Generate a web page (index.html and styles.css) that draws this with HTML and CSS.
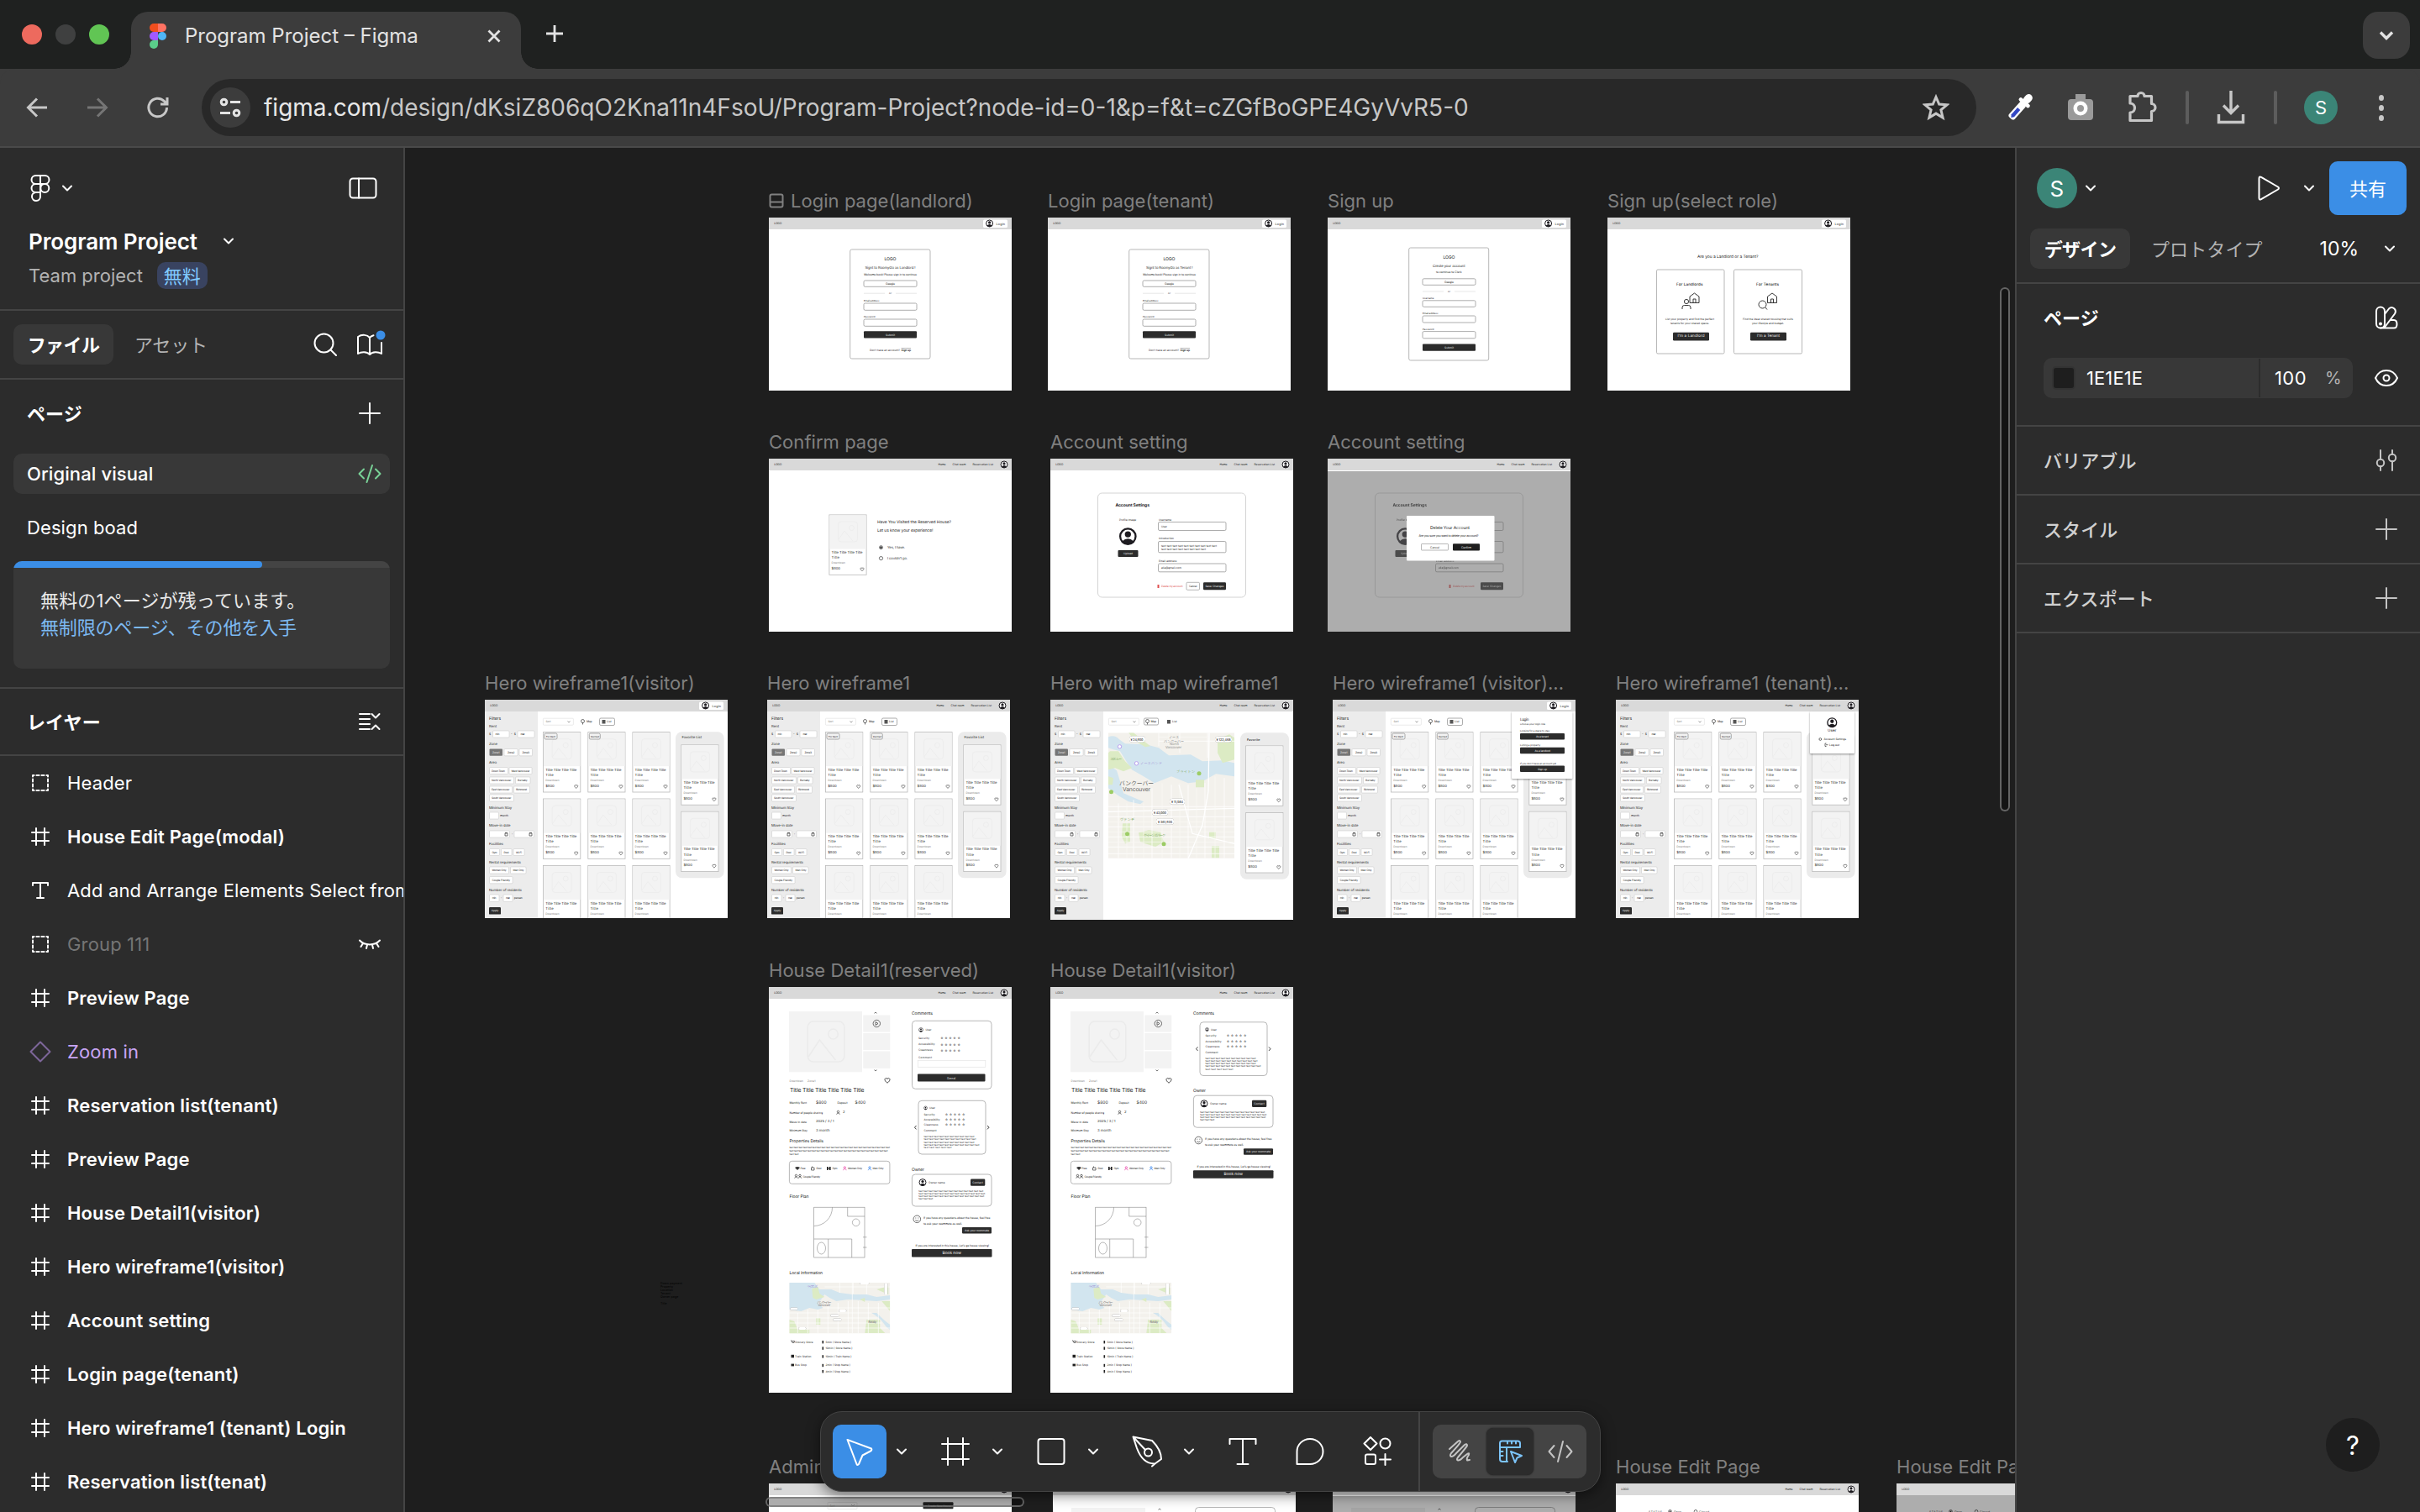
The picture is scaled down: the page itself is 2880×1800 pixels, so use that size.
FILE: index.html
```html
<!DOCTYPE html>
<html lang="ja">
<head>
<meta charset="utf-8">
<title>Program Project – Figma</title>
<link rel="stylesheet" href="styles.css">
</head>
<body>
<!-- Shared drawings -->
<svg class="defs" width="0" height="0">
<defs>
  <g id="i-chev"><path d="M-5-2.500 0 2.500 5-2.500"/></g>
  <g id="i-frame"><path d="M-5-10V10M5-10V10M-10-5H10M-10 5H10"/></g>
  <g id="i-plus"><path d="M-12 0H12M0-12V12"/></g>
  <g id="i-group"><rect x="-9" y="-9" width="18" height="18" stroke-dasharray="3.200 2.800" stroke-dashoffset="1.600"/></g>
  <g id="i-text"><path d="M-9-6V-9H9V-6M0-9V9M-4 9H4"/></g>

  <g id="avatar"><circle r="4" fill="#fff" stroke="#1d1b20" stroke-width="1"/><circle cy="-1.1" r="1.6" fill="#1d1b20"/><path d="M-3 2.6Q0-.4 3 2.6Q0 5.6-3 2.6" fill="#1d1b20"/></g>
  <g id="heart"><path d="M0 1.8C-3-.3-2-2 -.9-2Q-.2-2 0-1.3Q.2-2 .9-2C2-2 3-.3 0 1.8Z" fill="none" stroke="#333" stroke-width=".6"/></g>
  <g id="pic"><rect x="-11.5" y="-12" width="23" height="24" rx="3.5"/><circle cx="4.5" cy="-4.5" r="3"/><path d="M-11 9-4-1 6 11"/></g>
  <g id="stars"><text class="t36" x="0" y="0" textLength="24">☆☆☆☆☆</text></g>
  <g id="person"><circle cy="-1" r="1.2"/><path d="M-1.8 2.2C-1.5 0 1.5 0 1.8 2.2"/></g>

  <g id="hdr"><rect width="290" height="14" fill="#d9d9d9"/><text class="t34" x="6.3" y="7" textLength="9">LOGO</text></g>
  <g id="hdr-login"><use href="#hdr"/><rect x="255" y="2.5" width="29" height="9.5" rx="1.5" fill="#fff"/><use href="#avatar" x="262.6" y="7"/><text class="t36" x="270.5" y="7.2" textLength="10.5">Login</text></g>
  <g id="hdr-nav"><use href="#hdr"/><text class="t34" x="201.6" y="7" textLength="9">Home</text><text class="t34" x="218.5" y="7" textLength="16">Chat room</text><text class="t34" x="242.5" y="7" textLength="24.5">Reservation List</text><use href="#avatar" x="280" y="7"/></g>

  <g id="card">
    <rect x=".4" y=".4" width="44.2" height="71.4" fill="#fff" stroke="#b9b9b9" stroke-width=".8"/>
    <rect x=".8" y="1" width="43.4" height="40" fill="#f3f3f3"/>
    <use href="#pic" x="22.5" y="20.5" class="faint"/>
    <text class="t40" x="3" y="46" textLength="37">Title Title Title Title</text>
    <text class="t40" x="3" y="52.3" textLength="9.5">Title</text>
    <text class="t32 dim" x="3" y="57.8" textLength="16.5">Downtown</text>
    <text class="t40" x="3" y="65.2" textLength="10.5">$800</text>
    <use href="#heart" x="39.5" y="65.4"/>
  </g>

  <g id="sidebar">
    <rect y="14" width="63" height="250" fill="#ececec"/>
    <text class="t46" x="5" y="22.6" textLength="14">Filters</text>
    <text class="t40" x="5" y="32" textLength="9">Rent</text>
    <text class="t34" x="5" y="41">$</text><text class="t34" x="31" y="41" textLength="6">- $</text>
    <text class="t40" x="5" y="53.6" textLength="10">Zone</text>
    <text class="t40" x="5" y="75.2" textLength="9">Area</text>
    <text class="t40" x="5" y="129" textLength="27">Minimum Stay</text><text class="t34" x="18" y="138.4" textLength="10">month</text>
    <text class="t40" x="5" y="150.7" textLength="25.5">Move-in date</text><text class="t34" x="31.7" y="160">-</text>
    <text class="t40" x="5" y="172.4" textLength="17">Facilities</text>
    <text class="t40" x="5" y="194" textLength="38">Rental requirements</text>
    <text class="t40" x="5" y="227" textLength="39">Number of residents</text><text class="t34" x="18.8" y="236">-</text><text class="t34" x="34.8" y="236" textLength="10">person</text>
    <g class="chip">
      <rect x="9.5" y="37" width="19.5" height="8" rx="1"/><rect x="39" y="37" width="20" height="8" rx="1"/>
      <rect x="23" y="58.5" width="16" height="8.3" rx="1"/><rect x="41" y="58.5" width="15.5" height="8.3" rx="1"/>
      <rect x="5.5" y="80.5" width="22" height="8" rx="1"/><rect x="29" y="80.5" width="27" height="8" rx="1"/>
      <rect x="5.5" y="92" width="29" height="8" rx="1"/><rect x="36.5" y="92" width="17.5" height="8" rx="1"/>
      <rect x="5.5" y="103" width="27" height="8" rx="1"/><rect x="34.5" y="103" width="19" height="8" rx="1"/>
      <rect x="5.5" y="113" width="29" height="8" rx="1"/>
      <rect x="5.5" y="134" width="11" height="8" rx="1"/>
      <rect x="5.5" y="156" width="24" height="8" rx="1"/><rect x="35" y="156" width="23.5" height="8" rx="1"/>
      <rect x="5.5" y="177.5" width="12" height="8" rx="1"/><rect x="19.5" y="177.5" width="12.5" height="8" rx="1"/><rect x="34" y="177.5" width="13" height="8" rx="1"/>
      <rect x="5.5" y="199" width="23" height="8" rx="1"/><rect x="30.5" y="199" width="18.5" height="8" rx="1"/>
      <rect x="5.5" y="210.5" width="27.5" height="8.3" rx="1"/>
      <rect x="5.5" y="232" width="11.5" height="8.3" rx="1"/><rect x="22" y="232" width="11" height="8.3" rx="1"/>
    </g>
    <rect x="5.5" y="58.5" width="15.5" height="8.3" rx="1" fill="#757575"/>
    <rect x="5" y="247" width="14" height="8.6" rx="1.2" fill="#2c2c2c"/>
    <g class="t32">
      <text x="12.5" y="41" textLength="5">min</text><text x="42.5" y="41" textLength="5">max</text>
      <text class="inv" x="9" y="62.8" textLength="8.5">Zone1</text><text x="27" y="62.8" textLength="8.5">Zone2</text><text x="44.5" y="62.8" textLength="8.5">Zone3</text>
      <text x="8" y="84.6" textLength="16">Down Town</text><text x="31.5" y="84.6" textLength="22">West Vancouver</text>
      <text x="8" y="96" textLength="23.5">North Vancouver</text><text x="39" y="96" textLength="11.5">Burnaby</text>
      <text x="8" y="107.2" textLength="21.5">East Vancouver</text><text x="37" y="107.2" textLength="13">Richmond</text>
      <text x="8" y="117" textLength="23.5">South Vancouver</text>
      <text x="8.5" y="181.8" textLength="6">Gym</text><text x="22.5" y="181.8" textLength="6">Pool</text><text x="37" y="181.8" textLength="7">Wi-Fi</text>
      <text x="8.5" y="203.2" textLength="17">Women Only</text><text x="33.5" y="203.2" textLength="13">Men Only</text>
      <text x="8.5" y="214.8" textLength="21.5">Couple Friendly</text>
      <text x="8.7" y="236.2" textLength="4.6">min</text><text x="25" y="236.2" textLength="5">max</text>
      <text class="inv" x="7.8" y="251.3" textLength="8.6">Apply</text>
    </g>
    <path d="M24 159h3v3h-3zM24 158.4h3M53 159h3v3h-3zM53 158.4h3" fill="none" stroke="#333" stroke-width=".7"/>
  </g>
  <g id="sort"><rect x="69.4" y="22.2" width="36" height="8" rx="1" fill="#fff" stroke="#dedede" stroke-width=".6"/><text class="t32 dim" x="72.5" y="26.2" textLength="6">Sort</text><path d="M98.500 25.600 100 27l1.500-1.400" fill="none" stroke="#555" stroke-width=".6"/></g>
  <g id="favs">
    <rect x="227" y="38.3" width="57.6" height="174" rx="7.5" fill="#ebebeb"/>
    <text class="t40" x="234.5" y="45.4" textLength="23.5">Favorite List</text>
    <use href="#card" x="233.4" y="53.4"/><use href="#card" x="233.4" y="132.8"/>
  </g>
  <g id="hero-body">
    <rect width="290" height="262" fill="#fff"/>
    <use href="#sidebar"/><use href="#sort"/>
    <circle cx="116.5" cy="25.5" r="2" class="ln"/><path d="M116.500 27v2.500" class="ln"/><text class="t34" x="121" y="26.2" textLength="6.5">Map</text>
    <rect x="136.5" y="22" width="18" height="8.5" rx="1.6" class="lng"/><rect x="139.5" y="24" width="4" height="4.5" fill="#555"/><text class="t34" x="145" y="26.2" textLength="5.5">List</text>
    <use href="#card" x="69.2" y="38.2"/><use href="#card" x="122.4" y="38.2"/><use href="#card" x="175.5" y="38.2"/>
    <use href="#card" x="69.2" y="117.6"/><use href="#card" x="122.4" y="117.6"/><use href="#card" x="175.5" y="117.6"/>
    <use href="#card" x="69.2" y="197"/><use href="#card" x="122.4" y="197"/><use href="#card" x="175.5" y="197"/>
    <rect x="71" y="40" width="15" height="7" rx="1.5" class="tag"/><text class="t30" x="73" y="43.6" textLength="11">For Rent</text>
    <rect x="124.3" y="40" width="13" height="7" rx="1.5" class="tag"/><text class="t30" x="126" y="43.6" textLength="10">Rented</text>
    <use href="#favs"/>
  </g>

  <g id="acct">
    <rect x="56.5" y="41" width="176" height="124" rx="5" fill="none" stroke="#c9c9c9" stroke-width=".8"/>
    <text class="t48 b" x="77.5" y="55.6" textLength="40.5">Account Settings</text>
    <text class="t32" x="82" y="72.7" textLength="20">Profile Image</text>
    <g transform="translate(92.300 92.600) scale(2.300)"><use href="#avatar"/></g>
    <rect x="80.5" y="109" width="24" height="8" rx="1" fill="#2c2c2c"/><text class="t32 inv" x="87" y="113.2" textLength="11">Upload</text>
    <g class="fld"><rect x="128.5" y="75.5" width="80.5" height="10" rx="1.5"/><rect x="128.5" y="98.5" width="80.5" height="13.3" rx="1.5"/><rect x="128.5" y="125" width="80.5" height="9.8" rx="1.5"/></g>
    <text class="t32" x="129" y="72.7" textLength="15">Username</text><text class="t32" x="132" y="80.7" textLength="7">User</text>
    <text class="t32" x="129" y="95.3" textLength="18">Introduction</text>
    <text class="t32" x="132" y="103.6" textLength="66">text text text text text text text text text text</text>
    <text class="t32" x="132" y="107.5" textLength="53">text text text text text text text text</text>
    <text class="t32" x="129" y="122" textLength="21.5">Email address</text><text class="t32" x="132" y="130" textLength="24">alia@gmail.com</text>
    <rect x="182" y="147.3" width="27" height="9" rx="1.2" fill="#2c2c2c"/><text class="t32 inv" x="184.5" y="152" textLength="22">Save Changes</text>
  </g>

  <g id="signin-form">
    <rect x="96.7" y="38" width="95.3" height="130" rx="2" class="bx"/>
    <text class="t50" x="137.5" y="50" textLength="14">LOGO</text>
    <text class="t34" x="113" y="67.6" textLength="63">Welcome back! Please sign in to continue</text>
    <g class="fld"><rect x="113" y="75" width="63" height="7.3" rx="1.5"/><rect x="113" y="102" width="63" height="8.3" rx="1.5"/><rect x="113" y="121" width="63" height="8.3" rx="1.5"/></g>
    <text class="t34" x="139" y="78.8" textLength="11">Google</text>
    <path d="M113 90.200H138M151 90.200H176" stroke="#ddd" stroke-width=".7"/><text class="t30" x="143" y="90" textLength="3">or</text>
    <text class="t30" x="113" y="99" textLength="18.5">Email address</text><text class="t30" x="113" y="118" textLength="13.5">Password</text>
    <rect x="113" y="135.3" width="63" height="8.3" rx="1" fill="#2c2c2c"/><text class="t32 inv" x="139" y="139.7" textLength="11">Submit</text>
    <text class="t32" x="120" y="158.3" textLength="36">Don’t have an account?</text><text class="t32 b u" x="157.5" y="158.3" textLength="11.5">Sign up</text>
  </g>

  <g id="detail-left">
    <rect x="24" y="29" width="87" height="72.3" fill="#f3f3f3"/>
    <g transform="translate(68 65) scale(1.900 2)" class="faint"><use href="#pic"/></g>
    <g fill="#f3f3f3"><rect x="112.3" y="33.5" width="32" height="20"/><rect x="112.3" y="55" width="32" height="20"/><rect x="112.3" y="76.5" width="32" height="20.3"/></g>
    <path d="M125.500 31.300 127 30l1.500 1.300M125.500 98.700l1.500 1.300 1.500-1.300" class="ln"/>
    <circle cx="128.3" cy="43.5" r="4.2" class="ln"/><path d="M127 41.500v4l3-2z" class="ln"/>
    <text class="t32 dim" x="24.5" y="111.7" textLength="16.5">Downtown</text><text class="t32 dim" x="46" y="111.7" textLength="9.5">Zone1</text>
    <g transform="translate(141 111.500) scale(1.500)"><use href="#heart"/></g>
    <text class="t60" x="25" y="122.3" textLength="88.5">Title Title Title Title Title Title</text>
    <text class="t34" x="24.5" y="138" textLength="20.5">Monthly Rent</text><text class="t46" x="56" y="138" textLength="12.5">$800</text><text class="t34" x="81.5" y="138" textLength="12">Deposit</text><text class="t46" x="102.5" y="138" textLength="12.5">$400</text>
    <text class="t34" x="24.5" y="149.7" textLength="39.5">Number of people sharing</text><use href="#person" x="82.5" y="149.5" class="ln"/><text class="t40" x="88" y="149.7">2</text>
    <text class="t34" x="24.5" y="160.6" textLength="20.5">Move-in date</text><text class="t40" x="56" y="160.6" textLength="21.5">2025 / 3 / 1</text>
    <text class="t34" x="24.5" y="171" textLength="21.5">Minimum Stay</text><text class="t40" x="56" y="171" textLength="16.5">3 month</text>
    <text class="t48" x="24.5" y="183.8" textLength="40.5">Properties Details</text>
    <text class="t30" x="24.5" y="191.2" textLength="119.5">text text text text text text text text text text text text text text text text text text text text text text</text>
    <text class="t30" x="24.5" y="194.9" textLength="117">text text text text text text text text text text text text text text text text text text text text text text</text>
    <text class="t30" x="24.5" y="198.6" textLength="11">text text</text>
    <rect x="24.4" y="207.3" width="119.5" height="27" rx="3" class="bx"/>
    <path d="M31 215q3-2 6 0L34 218z" fill="#333"/><text class="t32" x="37.5" y="216.2" textLength="6">Free</text>
    <path d="M50.500 215h3.500v3h-3.500zM51.500 215v-1.500" class="ln"/><text class="t32" x="56.5" y="216.2" textLength="6">Pool</text>
    <path d="M69 214h1.600v4H69zM72 214h1.600v4H72zM69 215.500h4.500v1H69z" fill="#222"/><text class="t32" x="75.5" y="216.2" textLength="6">Gym</text>
    <use href="#person" x="90.3" y="216" class="ln pink"/><text class="t32" x="94" y="216.2" textLength="17">Women Only</text>
    <use href="#person" x="120" y="216" class="ln blue"/><text class="t32" x="123.5" y="216.2" textLength="13">Men Only</text>
    <use href="#person" x="32.5" y="225.5" class="ln"/><use href="#person" x="37" y="225.5" class="ln"/><text class="t32" x="40.5" y="225.7" textLength="20.5">Couple Friendly</text>
    <text class="t48" x="24.5" y="249.8" textLength="23">Floor Plan</text>
    <g class="plan"><rect x="53.7" y="262.2" width="60.3" height="59.8"/><path d="M75.500 262.200A22 22 0 0 1 53.700 284.500M93.700 262.200V273H114M53.700 300H98.700V322M70.700 300V322M112 297.800h4.500M112 310h4.500"/><ellipse cx="62.5" cy="311" rx="5" ry="7"/><circle cx="103.7" cy="280.3" r="4.3"/></g>
    <text class="t48" x="24.5" y="340.5" textLength="39.5">Local Information</text>
    <svg x="24.3" y="352" width="120" height="60.5" viewBox="0 0 120 60.500"><use href="#map-wide"/></svg>
    <path d="M26 421h1l1 2.500h2l.6-2h-3" class="ln"/><text class="t32" x="31" y="422.6" textLength="21.5">Grocery Store</text>
    <rect x="26.5" y="437.8" width="3.5" height="3.5" fill="#222"/><text class="t32" x="31" y="439.7" textLength="19.5">Train Station</text>
    <rect x="26.5" y="448.6" width="3.5" height="2.8" fill="#222"/><text class="t32" x="31" y="450.3" textLength="14">Bus Stop</text>
    <g fill="#222"><rect x="63.5" y="421" width="1.6" height="3.4"/><rect x="63.5" y="428.4" width="1.6" height="3.4"/><rect x="63.5" y="438.2" width="1.6" height="3.4"/><rect x="63.5" y="448.8" width="1.6" height="3.4"/><rect x="63.5" y="456" width="1.6" height="3.4"/></g>
    <g class="t32"><text x="67.5" y="422.6" textLength="30.5">5min ( Store Name )</text><text x="67.5" y="430" textLength="32">10min ( Store Name )</text><text x="67.5" y="439.7" textLength="31">10min ( Train Name )</text><text x="67.5" y="450.3" textLength="29.5">2min ( Stop Name )</text><text x="67.5" y="457.6" textLength="29.5">4min ( Stop Name )</text></g>
    <text class="t48" x="170" y="32" textLength="25">Comments</text>
  </g>
  <g id="review">
    <rect x="178" y="135.3" width="80" height="63.7" rx="4" class="bx"/>
    <g transform="translate(186.500 144) scale(.5)"><use href="#avatar"/></g><text class="t32" x="191" y="144.2" textLength="7">User</text>
    <text class="t32" x="184.5" y="151.6" textLength="13">Security</text><text class="t32" x="184.5" y="158" textLength="19">Accessibility</text><text class="t32" x="184.5" y="164.2" textLength="17">Cleanness</text>
    <use href="#stars" x="209.5" y="151.2"/><use href="#stars" x="209.5" y="157.6"/><use href="#stars" x="209.5" y="163.8"/>
    <text class="t32" x="184.5" y="171.4" textLength="15">Comment</text>
    <g class="t30"><text x="184.5" y="178" textLength="60">text text text text text text text text text text</text><text x="184.5" y="181.3" textLength="62">text text text text text text text text text text</text><text x="184.5" y="184.6" textLength="60">text text text text text text text text text text</text><text x="184.5" y="187.8" textLength="66">text text text text text text text text text text text</text><text x="184.5" y="191" textLength="33">text text text text text</text></g>
    <path d="M175.500 165 173.500 167.200l2 2.200M260 165l2 2.200-2 2.200" fill="none" stroke="#222" stroke-width=".9"/>
  </g>
  <g id="owner">
    <text class="t48" x="170" y="217.6" textLength="15">Owner</text>
    <rect x="170.4" y="223" width="94.6" height="38" rx="4" class="bx"/>
    <use href="#avatar" x="183" y="232.6"/><text class="t32" x="190" y="232.8" textLength="19.5">Owner name</text>
    <rect x="240" y="228.5" width="17.3" height="8.3" rx="1.2" fill="#2c2c2c"/><text class="t32 inv" x="242.3" y="232.8" textLength="12.5">Contact</text>
    <g class="t30"><text x="178.3" y="243" textLength="77">text text text text text text text text text text text text text</text><text x="178.3" y="245.9" textLength="79">text text text text text text text text text text text text text</text><text x="178.3" y="248.8" textLength="78">text text text text text text text text text text text text text</text><text x="178.3" y="251.7" textLength="17">text text text</text></g>
    <circle cx="176.3" cy="276.3" r="4.3" class="ln"/><path d="M174.300 277.500q2 2 4 0M174.800 274.500v1M177.800 274.500v1" class="ln"/>
    <text class="t34" x="184" y="275.2" textLength="79.5">If you have any questions about the house, feel free</text><text class="t34" x="184" y="282" textLength="46">to ask your roommate as well.</text>
    <rect x="230" y="286" width="35" height="7.5" rx="1" fill="#2c2c2c"/><text class="t32 inv" x="233" y="290" textLength="29">Ask your roommate</text>
    <text class="t34" x="174.5" y="307.6" textLength="87.5">If you are interested in this house, Let’s go house viewing!</text>
    <rect x="170" y="312" width="95.5" height="9.5" rx="1" fill="#2c2c2c"/><text class="t46 inv" x="206.5" y="317" textLength="22.5">Book now</text>
  </g>

  <g id="map-sq">
    <rect width="150" height="150" fill="#f3f1ec"/>
    <path d="M0 5Q8 2 13 8L20 13 45 14 60 18 72 27 98 26 112 34 135 33 150 36V52L128 49 112 58 95 60 75 52 55 60 42 52 28 44 22 35 14 22 6 20 0 18ZM0 38 10 45 14 58 18 72 32 78 42 82 38 85 24 82 12 75 0 66Z" fill="#d2e5ef"/>
    <path d="M2 22 12 22 20 34 28 42 18 46 8 42 0 44V24ZM24 0 30 0 50 16 44 17 32 10ZM104 56h10v9h-10zM36 119l12-3 14 2 4 12-10 6-18-6ZM17 108h9v22l-6 2-4-8ZM123 135h9v14h-9zM130 8l14-6 6 4V32l-14 4-6-12ZM120 118h8v8h-8zM0 52 6 54 5 62 0 62Z" fill="#dcebc4"/>
    <path d="M0 88H150M0 100H150M0 112H150M0 124H150M0 136H150M30 80V150M52 66V150M75 62V150M95 62V150M115 60V150M138 54V150M12 84V150M0 144H150M60 16V0M85 24V0M118 30V0M60 10H150" stroke="#fff" stroke-width=".8" fill="none"/>
    <path d="M120 0 119 70 112 110 95 150M0 94Q70 92 150 90M84 62 100 120 150 132" stroke="#fff" stroke-width="1.3" fill="none"/>
    <path d="M22 84V150M42 84V150M64 60V150M85 60V150M105 66V150M127 52V150M0 106H150M0 118H150M0 130H150M60 5H118M72 0V20" stroke="#faf9f6" stroke-width=".7" fill="none"/>
    <g fill="#9ccc65"><circle cx="108" cy="48.5" r="2.5"/><circle cx="22.5" cy="120.5" r="2.5"/><circle cx="66" cy="132.5" r="2.5"/><circle cx="3.5" cy="70.5" r="2.5"/></g>
    <g fill="#fff" stroke="#b9a0f0" stroke-width="1"><circle cx="13.5" cy="16.5" r="2.2"/><circle cx="33.5" cy="36.5" r="2.2"/></g>
    <g class="mapt"><text x="13" y="60" textLength="41" class="city">バンクーバー</text><text x="17" y="67.5" textLength="33" class="city">Vancouver</text>
    <text x="72" y="5" textLength="12">ノース</text><text x="66" y="10" textLength="24">バンクーバー</text><text x="73" y="13.5" textLength="11">North</text><text x="68" y="17.5" textLength="19">Vancouver</text>
    <text x="38" y="36" textLength="26" class="vi">ノースバンド</text><text x="81" y="46.5" textLength="22" class="gr">ブライトン</text><text x="42" y="122" textLength="26" class="gr">クイーンズパーク</text><text x="14" y="103" textLength="17" class="gr">ヴァンデ</text><text x="2" y="31" textLength="14" class="gr">スタンレー</text></g>
    <g class="price"><rect x="25" y="4" width="19" height="7.5" rx="3.7"/><rect x="127" y="4.5" width="20" height="7" rx="3.5"/><rect x="73" y="78.500" width="18" height="7" rx="3.5"/><rect x="52" y="91" width="19" height="7.5" rx="3.5"/><rect x="57" y="102" width="21" height="7.5" rx="3.5"/></g>
    <g class="t36 m"><text x="26.5" y="7.8" textLength="15">¥ 24,900</text><text x="128.5" y="8" textLength="17">¥ 122,468</text><text x="75" y="82" textLength="14">¥ 11,584</text><text x="54" y="94.8" textLength="15">¥ 43,000</text><text x="59" y="105.8" textLength="17">¥ 361,935</text></g>
  </g>
  <g id="map-wide">
    <rect width="120" height="60.5" fill="#f3f1ec"/>
    <path d="M0 0H30L36 8 50 8 60 12 75 14 92 14 104 17 120 15V20L104 22 88 21 70 20 56 22 48 18 42 14 38 20 34 24 40 30 34 32 24 30 14 34 0 32ZM98 36Q108 42 112 48T120 56V50Q114 46 104 36Z" fill="#d2e5ef"/>
    <path d="M27 7 34 5 36 13 42 17 32 20 28 18ZM0 44 6 46 10 56 24 56V60.500H0ZM92 44h16v10l6 6H90ZM104 8 118 4V14ZM32 42h5v8h-5zM110 22h10v12zM84 20l6-2v5z" fill="#dcebc4"/>
    <path d="M10 36V60M22 32V60M34 32V60M46 24V60M58 24V60M70 22V60M82 22V60M94 24V60M106 24V60M0 36H98M0 42H105M0 48H110M0 54H120M40 30H120M60 12V0M76 13V0M92 14V0M75 0V60M42 5H120" stroke="#fff" stroke-width=".7" fill="none"/>
    <g class="mapt"><text x="33" y="23.5" textLength="17">バンクーバー</text><text x="34" y="26.5" textLength="15">Vancouver</text><text x="21" y="4" textLength="13" class="vi">ライオンズ</text><text x="94" y="46.5" textLength="10">Burnaby</text></g>
    <g class="price"><rect x="1" y="29.5" width="9" height="3" rx="1.5"/><rect x="59" y="32" width="9" height="3" rx="1.5"/><rect x="49" y="37.5" width="10" height="3" rx="1.5"/><rect x="52" y="42.5" width="10" height="3" rx="1.5"/><rect x="11" y="53" width="9" height="3" rx="1.5"/><rect x="84" y="-1" width="11" height="3" rx="1.5"/><rect x="113" y="1" width="4" height="13" rx=".5"/></g>
  </g>
  <g id="edit"><rect width="290" height="40" fill="#fff"/><text class="t34" x="39" y="33.5" textLength="16">STATUS</text><circle cx="64.5" cy="33.3" r="1.8" class="ln"/><circle cx="64.5" cy="33.3" r=".9" fill="#222"/><text class="t34" x="69" y="33.5" textLength="9">Open</text><circle cx="95" cy="33.3" r="1.8" class="ln"/><text class="t34" x="99" y="33.5" textLength="12">Closed</text></g>
  <g id="admin-form"><rect x="22" y="29" width="88" height="20" fill="#f3f3f3"/><path d="M125.500 31.300 127 30l1.500 1.300" class="ln"/><rect x="169.5" y="28.5" width="95" height="40" rx="4" class="bx"/></g>
</defs>
</svg>

<header class="browser">
  <div class="tabstrip">
    <div class="lights"><i class="red"></i><i class="off"></i><i class="green"></i></div>
    <div class="tab">
      <svg width="20" height="30" viewBox="0 0 20 30"><path d="M5 0h5v10H5A5 5 0 0 1 5 0" fill="#f24e1e"/><path d="M10 0h5a5 5 0 0 1 0 10h-5z" fill="#ff7262"/><path d="M5 10h5v10H5a5 5 0 0 1 0-10" fill="#a259ff"/><circle cx="15" cy="15" r="5" fill="#4fb6f7"/><path d="M5 20h5v5a5 5 0 1 1-5-5" fill="#5ace8a"/></svg>
      <span>Program Project – Figma</span>
      <svg class="x" width="16" height="16" viewBox="0 0 16 16"><path d="M1.500 1.500 14.500 14.500M14.500 1.500 1.500 14.500"/></svg>
    </div>
    <svg class="newtab" width="22" height="22" viewBox="0 0 22 22"><path d="M11 1V21M1 11H21"/></svg>
    <div class="tabmenu"><svg width="20" height="14" viewBox="0 0 20 14"><path d="M3 3.500 10 10.500 17 3.500"/></svg></div>
  </div>
  <div class="toolbar">
    <svg class="nav" width="26" height="26" viewBox="0 0 26 26"><path d="M25 13H3M13 2.500 2.500 13 13 23.500"/></svg>
    <svg class="nav muted" width="26" height="26" viewBox="0 0 26 26"><path d="M1 13H23M13 2.500 23.500 13 13 23.500"/></svg>
    <svg class="nav" width="26" height="26" viewBox="0 0 26 26"><path d="M23.500 13A10.800 10.800 0 1 1 20.500 5.500L23.500 8.500M24 1V9H16"/></svg>
    <div class="omnibox">
      <div class="site"><svg width="26" height="26" viewBox="0 0 26 26"><circle cx="5.5" cy="6.5" r="3.3"/><path d="M13 6.500H25M1 19.500H13"/><circle cx="20.5" cy="19.5" r="3.3"/></svg></div>
      <span class="url"><b>figma.com</b>/design/dKsiZ806qO2Kna11n4FsoU/Program-Project?node-id=0-1&amp;p=f&amp;t=cZGfBoGPE4GyVvR5-0</span>
      <svg class="star" width="32" height="32" viewBox="0 0 32 32"><path d="M16 3.500 19.700 12 29 12.800 21.900 18.900 24.100 28 16 23.100 7.900 28 10.100 18.900 3 12.800 12.300 12Z"/></svg>
    </div>
    <div class="ext">
      <svg width="34" height="42" viewBox="0 0 34 42"><g transform="translate(17 21) rotate(42)"><rect x="-4.5" y="-7" width="9" height="24" rx="3" fill="#fff"/><path d="M-2.200 2H2.200V13L0 16-2.200 13Z" fill="#3347c4"/><rect x="-8" y="-10" width="16" height="4.5" rx="2" fill="#fff"/><rect x="-4.5" y="-20" width="9" height="12" rx="4.5" fill="#fff"/></g></svg>
      <svg width="32" height="36" viewBox="0 0 32 36"><path d="M10 2h12v6h5a4 4 0 0 1 4 4v17a4 4 0 0 1-4 4H5a4 4 0 0 1-4-4V12a4 4 0 0 1 4-4h5z" fill="#9a9a9a"/><circle cx="16" cy="19" r="8.5" fill="#fff"/><circle cx="16" cy="19" r="4" fill="#9a9a9a"/></svg>
      <svg width="36" height="42" viewBox="0 0 36 42"><path d="M4 7.500H13A4 4 0 0 1 21 7.500H29.500V16.500A4.500 4.500 0 0 1 29.500 25.500V36.500H4V27A5.500 5.500 0 0 0 4 16Z" fill="none" stroke="#c7c7c7" stroke-width="3.2" stroke-linejoin="round"/></svg>
      <i class="bar"></i>
      <svg width="34" height="42" viewBox="0 0 34 42"><path d="M17 1V27M8 18.500 17 27.500 26 18.500M2.500 29V38.500H31.500V29" fill="none" stroke="#c7c7c7" stroke-width="3.4"/></svg>
      <i class="bar"></i>
      <div class="me">S</div>
      <div class="dots"><i></i><i></i><i></i></div>
    </div>
  </div>
</header>

<main>
  <aside class="left">
    <section class="file">
      <div class="row top">
        <svg width="60" height="34" viewBox="0 0 60 34" class="ic"><path d="M12 2H6.500a5 5 0 0 0 0 10H12zM12 2h5.500a5 5 0 0 1 0 10H12zM12 12H6.500a5 5 0 0 0 0 10H12zM12 22H6.500a5 5 0 1 0 5.500 5z"/><circle cx="17.3" cy="17" r="5"/><use href="#i-chev" x="44" y="17"/></svg>
        <svg width="34" height="26" viewBox="0 0 34 26" class="ic"><rect x="1.5" y="1.5" width="31" height="23" rx="3.5"/><path d="M12 1.500V24.500"/></svg>
      </div>
      <div class="row title"><span>Program Project</span><svg width="14" height="10" viewBox="-7 -5 14 10" class="ic"><use href="#i-chev"/></svg></div>
      <div class="row team"><span>Team project</span><em>無料</em></div>
    </section>
    <section class="row tabs">
      <span class="pill">ファイル</span><span class="other">アセット</span>
      <svg class="ic search" width="28" height="28" viewBox="0 0 28 28"><circle cx="12.5" cy="12.5" r="11"/><path d="M20.500 20.500 27 27"/></svg>
      <svg class="ic" width="36" height="36" viewBox="0 0 36 36"><path d="M17 10V30C14 26.500 7 26.500 3 29V9C8 5.500 14 6.500 17 10ZM17 30C20 26.500 27 26.500 31 29V16M17 10Q18.500 8 21.500 7.200"/><circle cx="30" cy="7" r="5.5" fill="#3b8ee6" stroke="none"/></svg>
    </section>
    <section class="pages">
      <div class="row head"><span>ページ</span><svg class="ic" width="26" height="26" viewBox="-13 -13 26 26"><use href="#i-plus"/></svg></div>
      <div class="row page on"><span>Original visual</span><svg width="28" height="24" viewBox="-14 -12 28 24" class="ic code"><path d="M-7-5.500-12.500 0-7 5.500M7-5.500 12.500 0 7 5.500M3-10-3.500 10"/></svg></div>
      <div class="row page"><span>Design boad</span></div>
      <div class="quota"><div class="meter"><i></i></div><p><span>無料の1ページが残っています。</span><br><a>無制限のページ、その他を入手</a></p></div>
    </section>
    <section class="row layers-head"><span>レイヤー</span><svg class="ic" width="26" height="24" viewBox="-13 -12 26 24"><path d="M-12-9H0M-12-3H0M-12 3H0M-12 9H0M2.500-9 7-4.500 11.500-9M2.500 9 7 4.500 11.500 9"/></svg></section>
    <ul class="layers">
      <li><svg class="ic" width="26" height="24" viewBox="-13 -12 26 24"><use href="#i-group"/></svg><span>Header</span></li>
      <li class="f"><svg class="ic" width="26" height="24" viewBox="-13 -12 26 24"><use href="#i-frame"/></svg><span>House Edit Page(modal)</span></li>
      <li><svg class="ic" width="26" height="24" viewBox="-13 -12 26 24"><use href="#i-text"/></svg><span>Add and Arrange Elements Select from</span></li>
      <li class="hid"><svg class="ic" width="26" height="24" viewBox="-13 -12 26 24"><use href="#i-group"/></svg><span>Group 111</span><svg class="ic eye" width="26" height="14" viewBox="-13 -7 26 14"><path d="M-12-4.500C-6 2 6 2 12-4.500M-8-1-10.500 3M-3 .8-4 5M3 .8 4 5M8-1 10.500 3"/></svg></li>
      <li class="f"><svg class="ic" width="26" height="24" viewBox="-13 -12 26 24"><use href="#i-frame"/></svg><span>Preview Page</span></li>
      <li class="comp"><svg class="ic" width="26" height="26" viewBox="-13 -13 26 26"><path d="M0-11.500 11.500 0 0 11.500-11.500 0Z"/></svg><span>Zoom in</span></li>
      <li class="f"><svg class="ic" width="26" height="24" viewBox="-13 -12 26 24"><use href="#i-frame"/></svg><span>Reservation list(tenant)</span></li>
      <li class="f"><svg class="ic" width="26" height="24" viewBox="-13 -12 26 24"><use href="#i-frame"/></svg><span>Preview Page</span></li>
      <li class="f"><svg class="ic" width="26" height="24" viewBox="-13 -12 26 24"><use href="#i-frame"/></svg><span>House Detail1(visitor)</span></li>
      <li class="f"><svg class="ic" width="26" height="24" viewBox="-13 -12 26 24"><use href="#i-frame"/></svg><span>Hero wireframe1(visitor)</span></li>
      <li class="f"><svg class="ic" width="26" height="24" viewBox="-13 -12 26 24"><use href="#i-frame"/></svg><span>Account setting</span></li>
      <li class="f"><svg class="ic" width="26" height="24" viewBox="-13 -12 26 24"><use href="#i-frame"/></svg><span>Login page(tenant)</span></li>
      <li class="f"><svg class="ic" width="26" height="24" viewBox="-13 -12 26 24"><use href="#i-frame"/></svg><span>Hero wireframe1 (tenant) Login</span></li>
      <li class="f"><svg class="ic" width="26" height="24" viewBox="-13 -12 26 24"><use href="#i-frame"/></svg><span>Reservation list(tenat)</span></li>
    </ul>
  </aside>

  <div class="canvas">
    <div class="stage">
      <figure class="r1 c1"><figcaption><svg width="18" height="18" viewBox="0 0 18 18"><rect x="1.5" y="1.5" width="15" height="15" rx="2"/><path d="M2 10.500H16"/></svg>Login page(landlord)</figcaption>
        <svg class="ab" width="289" height="206"><use href="#signin-form"/><text class="t40" x="114.5" y="60.6" textLength="60">Signt to RoomyGo as Landlord !</text><use href="#hdr-login"/></svg></figure>
      <figure class="r1 c2"><figcaption>Login page(tenant)</figcaption>
        <svg class="ab" width="289" height="206"><use href="#signin-form"/><text class="t40" x="117" y="60.6" textLength="55.5">Signt to RoomyGo as Tenant !</text><use href="#hdr-login"/></svg></figure>
      <figure class="r1 c3"><figcaption>Sign up</figcaption>
        <svg class="ab" width="289" height="206"><use href="#hdr-login"/>
          <rect x="96.7" y="36" width="95" height="134" rx="2" class="bx"/><text class="t50" x="137.5" y="47.8" textLength="14">LOGO</text>
          <text class="t40" x="125" y="58.6" textLength="38.5">Create your account</text><text class="t34" x="129" y="65.3" textLength="30.5">to continue to Clerk</text>
          <g class="fld"><rect x="113" y="72.8" width="63" height="7.5" rx="1.5"/><rect x="113" y="98.8" width="63" height="7.5" rx="1.5"/><rect x="113" y="117" width="63" height="8" rx="1.5"/><rect x="113" y="135.6" width="63" height="8.2" rx="1.5"/></g>
          <text class="t34" x="139" y="76.7" textLength="11">Google</text><path d="M113 88H138M151 88H176" stroke="#ddd" stroke-width=".7"/><text class="t30" x="143" y="88" textLength="3">or</text>
          <g class="t30"><text x="113" y="95.5" textLength="13.5">Username</text><text x="113" y="114.3" textLength="18.5">Email address</text><text x="113" y="133" textLength="13.5">Password</text></g>
          <rect x="113" y="150.5" width="63" height="8.3" rx="1" fill="#2c2c2c"/><text class="t32 inv" x="139" y="154.9" textLength="11">Submit</text></svg></figure>
      <figure class="r1 c4"><figcaption>Sign up(select role)</figcaption>
        <svg class="ab" width="289" height="206"><use href="#hdr-login"/>
          <text class="t46" x="107" y="46.7" textLength="72.5">Are you a Landlord or a Tenant?</text>
          <rect x="58.5" y="62" width="80.5" height="100" rx="1.5" class="bx"/><rect x="150.5" y="62" width="81" height="100" rx="1.5" class="bx"/>
          <text class="t42 m" x="82" y="80.3" textLength="31.5">For Landlords</text><text class="t42 m" x="177" y="80.3" textLength="27">For Tenants</text>
          <g class="ln2"><path d="M98 101.500V94L103.500 90 109 94V101.500ZM102 101.500V97h3v4.500M89 109v-2q0-2.500 2.500-2.500h5q2.500 0 2.500 2.500v2"/><circle cx="94" cy="100" r="2.6"/><path d="M190.500 101.500V94L196 90 201.500 94V101.500ZM194.500 101.500V97h3v4.500M188 107 190 109.500"/><circle cx="184.5" cy="103.5" r="4.5"/></g>
          <g class="t32"><text x="69" y="121.2" textLength="58">List your property and find the perfect</text><text x="75" y="126.4" textLength="46">tenants for your shared space.</text><text x="161" y="121.2" textLength="60">Find the ideal shared housing that suits</text><text x="172" y="126.4" textLength="38">your lifestyle and budget.</text></g>
          <rect x="78" y="136.7" width="43" height="9.8" rx="1.2" fill="#2c2c2c"/><rect x="170" y="136.7" width="43" height="9.8" rx="1.2" fill="#2c2c2c"/>
          <text class="t42 inv" x="83.5" y="141.9" textLength="32">I’m a Landlord</text><text class="t42 inv" x="178" y="141.9" textLength="27">I’m a Tenant</text></svg></figure>

      <figure class="r2 c1"><figcaption>Confirm page</figcaption>
        <svg class="ab" width="289" height="206"><use href="#hdr-nav"/><use href="#card" x="71.5" y="66.5"/>
          <text class="t46" x="129" y="76.3" textLength="88">Have You Visited the Reserved House?</text><text class="t46" x="129" y="86" textLength="66.5">Let us know your experience!</text>
          <circle cx="133.5" cy="105.7" r="2" class="ln"/><circle cx="133.5" cy="105.7" r="1.2" fill="#222"/><circle cx="133.5" cy="118.6" r="2.1" class="ln"/>
          <text class="t38" x="141" y="105.8" textLength="21">Yes, I have.</text><text class="t38" x="141" y="118.7" textLength="24">I couldn’t go.</text></svg></figure>
      <figure class="r2 c2b"><figcaption>Account setting</figcaption>
        <svg class="ab" width="289" height="206"><use href="#hdr-nav"/><use href="#acct"/><rect x="127.5" y="150" width="2" height="4" fill="#e05050"/><text class="t32 red" x="132" y="152" textLength="25.5">Delete my account</text><rect x="162" y="147.3" width="15.5" height="9" rx="1.2" class="bx"/><text class="t32" x="165" y="152" textLength="9.5">Cancel</text></svg></figure>
      <figure class="r2 c3"><figcaption>Account setting</figcaption>
        <svg class="ab" width="289" height="206"><g opacity=".68"><rect width="290" height="206" fill="#fff"/><use href="#acct"/><rect x="144.5" y="150" width="2" height="4" fill="#e05050"/><text class="t32 red" x="149" y="152" textLength="25.5">Delete my account</text></g>
          <rect y="15" width="290" height="191" fill="#000" opacity=".32"/><use href="#hdr-nav"/>
          <rect x="94" y="68" width="104.5" height="53.5" rx="1" fill="#fff"/>
          <text class="t50" x="122" y="83.2" textLength="47">Delete Your Account</text><text class="t36" x="108.5" y="91.2" textLength="71">Are you sure you want to delete your account?</text>
          <rect x="111.5" y="101.5" width="32" height="7.5" rx=".6" class="bx"/><rect x="149" y="101.2" width="32" height="8.2" rx="1" fill="#1e1e1e"/><text class="t34" x="122" y="105.5" textLength="11">Cancel</text><text class="t34 inv" x="159" y="105.5" textLength="12">Confirm</text></svg></figure>

      <figure class="r3 c0"><figcaption>Hero wireframe1(visitor)</figcaption><svg class="ab" width="289" height="260"><use href="#hero-body"/><use href="#hdr-login"/></svg></figure>
      <figure class="r3 c1h"><figcaption>Hero wireframe1</figcaption><svg class="ab" width="289" height="260"><use href="#hero-body"/><use href="#hdr-nav"/></svg></figure>
      <figure class="r3 c2b"><figcaption>Hero with map wireframe1</figcaption>
        <svg class="ab" width="289" height="262"><use href="#sidebar"/><use href="#sort"/><use href="#hdr-nav"/>
          <rect x="111.5" y="22" width="17" height="8" rx="1.5" class="lng"/><circle cx="115.5" cy="25.5" r="2" class="ln"/><path d="M115.500 27v2.500" class="ln"/><text class="t34" x="119.5" y="26.2" textLength="6.5">Map</text><rect x="139" y="24" width="4" height="4.5" fill="#555"/><text class="t34" x="145" y="26.2" textLength="5.5">List</text>
          <svg x="69" y="39.3" width="150" height="149.5"><use href="#map-sq"/></svg>
          <rect x="226" y="39.3" width="58" height="174.5" rx="7.5" fill="#ebebeb"/><text class="t36 m" x="234" y="47" textLength="15.5">Favorite</text>
          <use href="#card" x="232.3" y="54.5"/><use href="#card" x="232.3" y="134.2"/></svg></figure>
      <figure class="r3 c3h"><figcaption>Hero wireframe1 (visitor)...</figcaption>
        <svg class="ab" width="289" height="260"><use href="#hero-body"/><use href="#hdr-login"/>
          <rect x="213" y="14" width="72.5" height="80" rx="1" class="pop"/>
          <text class="t42" x="223" y="24.2" textLength="10.5">Login</text><g class="t30"><text x="223" y="29.4" textLength="30">Choose your login role</text><text x="223" y="37" textLength="35">Looking for a place to stay</text><text x="223" y="53.6" textLength="24">Listing a property</text><text x="223" y="75.5" textLength="43">If you don’t have an account yet</text></g>
          <g fill="#2c2c2c"><rect x="223" y="40" width="53" height="7.5" rx="1"/><rect x="223" y="56.8" width="53" height="7.5" rx="1"/><rect x="223" y="78.5" width="53" height="7.5" rx="1"/></g>
          <g class="t32"><text class="inv" x="242" y="44" textLength="15">As a tenant</text><text class="inv" x="240.5" y="60.8" textLength="18.5">As a landlord</text><text class="inv" x="244" y="82.5" textLength="11">Sign up</text></g></svg></figure>
      <figure class="r3 c4h"><figcaption>Hero wireframe1 (tenant)...</figcaption>
        <svg class="ab" width="289" height="260"><use href="#hero-body"/><use href="#hdr-nav"/>
          <rect x="231" y="14" width="53" height="50" rx="1" class="pop"/><g transform="translate(257.300 27.200) scale(1.350)"><use href="#avatar"/></g>
          <text class="t42" x="252" y="37.7" textLength="10.5">User</text><circle cx="243.3" cy="47" r="1.4" class="ln"/><text class="t34" x="247.5" y="47.1" textLength="26.5">Account Settings</text><path d="M250.500 52H249v3.500h1.500M250 53.700h2.500" class="ln"/><text class="t34" x="254" y="53.9" textLength="12">Log out</text></svg></figure>

      <figure class="r4 c1"><figcaption>House Detail1(reserved)</figcaption>
        <svg class="ab" width="289" height="483"><use href="#hdr-nav"/><use href="#detail-left"/>
          <rect x="170.5" y="40.3" width="94.5" height="81" rx="4" class="bx"/>
          <g transform="translate(181 51) scale(.6)"><use href="#avatar"/></g><text class="t32" x="186.5" y="51.2" textLength="7">User</text>
          <text class="t32" x="178" y="61" textLength="13">Security</text><text class="t32" x="178" y="68" textLength="19.5">Accessibility</text><text class="t32" x="178" y="75" textLength="17">Cleanness</text>
          <use href="#stars" x="204" y="60.4"/><use href="#stars" x="204" y="68"/><use href="#stars" x="204" y="75"/>
          <text class="t32" x="178" y="84" textLength="16">Comment</text><rect x="177.3" y="87.3" width="80.5" height="8" fill="#fff" stroke="#e4e4e4" stroke-width=".7"/>
          <rect x="177" y="103.5" width="80.5" height="9" rx="1" fill="#2c2c2c"/><text class="t36 inv" x="212" y="108.2" textLength="10">Send</text>
          <use href="#review"/><use href="#owner"/></svg></figure>
      <figure class="r4 c2b"><figcaption>House Detail1(visitor)</figcaption>
        <svg class="ab" width="289" height="483"><use href="#hdr-nav"/><use href="#detail-left"/><use href="#review" y="-93.5"/><use href="#owner" y="-93.8"/></svg></figure>

      <figure class="r5 c1"><figcaption>Admin page</figcaption><svg class="ab" width="289" height="40"><use href="#hdr-nav"/><rect x="70" y="22.5" width="35" height="8" rx="1" fill="#fff" stroke="#dedede" stroke-width=".6"/><text class="t32" x="72.5" y="26.5" textLength="6">Sort</text><path d="M98.500 25.600 100 27l1.500-1.400" class="ln"/><rect x="183.5" y="22.3" width="36" height="8" rx="1" fill="#2c2c2c"/><text class="t32 inv" x="186" y="26.5" textLength="31">+ Create New House</text></svg></figure>
      <figure class="r5 c2c"><svg class="ab" width="289" height="40"><use href="#hdr-nav"/><use href="#admin-form"/></svg></figure>
      <figure class="r5 c3h"><svg class="ab" width="289" height="40"><use href="#admin-form"/><rect y="15" width="290" height="191" fill="#000" opacity=".32"/><use href="#hdr-nav"/></svg></figure>
      <figure class="r5 c4h"><figcaption>House Edit Page</figcaption><svg class="ab" width="289" height="40"><use href="#edit"/><use href="#hdr-nav"/></svg></figure>
      <figure class="r5 c5"><figcaption>House Edit Page(modal)</figcaption><svg class="ab" width="289" height="40"><use href="#edit"/><rect y="14" width="290" height="191" fill="#000" opacity=".32"/><use href="#hdr-nav"/></svg></figure>

      <p class="note">Down payment<br>Property<br>Location<br>Tenant<br>Owner page<br><br>Title</p>
      <i class="vscroll"></i><i class="hscroll"></i>

      <nav class="tools">
        <div class="set">
          <b class="move"><svg class="ic" width="36" height="36" viewBox="-18 -18 36 36"><path d="M-14.500-14 14-3.500Q15-1.500 13 -.5L3.500 4.500-1 15Q-2.500 17-3.500 15Z"/></svg></b>
          <svg class="ic" width="14" height="10" viewBox="-7 -5 14 10"><use href="#i-chev"/></svg>
          <svg class="ic tool" width="36" height="36" viewBox="-18 -18 36 36"><path d="M-9-16V16M9-16V16M-16-9H16M-16 9H16"/></svg>
          <svg class="ic" width="14" height="10" viewBox="-7 -5 14 10"><use href="#i-chev"/></svg>
          <svg class="ic tool" width="36" height="36" viewBox="-18 -18 36 36"><rect x="-15.5" y="-15" width="31" height="30" rx="3"/></svg>
          <svg class="ic" width="14" height="10" viewBox="-7 -5 14 10"><use href="#i-chev"/></svg>
          <svg class="ic tool pen" width="38" height="38" viewBox="-19 -19 38 38"><path d="M-16.500-17.500 6-13Q17-2 17 9L9.500 14.500Q-5 15-12-4ZM-16.500-17.500-2-2M9.500 14.500 6 17.500"/><circle cx="1.5" cy="1" r="4.5"/></svg>
          <svg class="ic" width="14" height="10" viewBox="-7 -5 14 10"><use href="#i-chev"/></svg>
          <svg class="ic tool" width="36" height="36" viewBox="-18 -18 36 36"><path d="M-15.500-9V-15H15.500V-9M0-15V15M-6.500 15H6.500"/></svg>
          <svg class="ic tool gap" width="36" height="36" viewBox="-18 -18 36 36"><path d="M-15.500 15V0A15.500 15 0 1 1 0 15Z"/></svg>
          <svg class="ic tool gap" width="36" height="36" viewBox="-18 -18 36 36"><path d="M-8-17 -.5-9.500-8-2-15.500-9.500Z"/><circle cx="9.5" cy="-9.5" r="6"/><rect x="-14" y="3.5" width="12" height="11.5" rx="2"/><path d="M9.500 3V16M3 9.500H16"/></svg>
        </div>
        <div class="modes">
          <svg class="ic g" width="30" height="30" viewBox="-15 -15 30 30"><path d="M-12-3-2-12Q1-14 1-11.500 1-10-10 2-12 5-10 6-8 6.500-4 2L6-8Q9-10 9-7 8-5-2 7-4 10-2 10.500 0 11 4 7L9 3Q12 1 11 4 8 8 9 10.500L12 10"/></svg>
          <b><svg class="ic bl" width="30" height="30" viewBox="-15 -15 30 30"><path d="M-3 12H-9Q-12 12-12 9V-10Q-12-12.500-9.500-12.500H9Q12-12.500 12-10V-5H-4V12M-12-5H-4M-12 0H-8.500M-12 5H-8.500M-3-12.500V-9.500M2-12.500V-9.500M7-12.500V-9.500M1 0 14 5 8.500 7.500 6 13Z"/></svg></b>
          <svg class="ic g" width="30" height="30" viewBox="-15 -15 30 30"><path d="M-7.500-7-13.500 0-7.500 7M7.500-7 13.500 0 7.500 7M3-12-3 12"/></svg>
        </div>
      </nav>
    </div>
  </div>

  <aside class="right">
    <section class="share">
      <div class="row"><div class="me big">S</div><svg class="ic c1g" width="14" height="10" viewBox="-7 -5 14 10"><use href="#i-chev"/></svg>
        <svg class="ic play" width="28" height="32" viewBox="0 0 28 32"><path d="M2.500 4.500Q2.500 1.500 5 2.800L25 14.500Q27 16 25 17.500L5 29.200Q2.500 30.500 2.500 27.500Z"/></svg><svg class="ic c2g" width="14" height="10" viewBox="-7 -5 14 10"><use href="#i-chev"/></svg><button>共有</button></div>
      <div class="row tabs2"><span class="pill">デザイン</span><span class="other">プロトタイプ</span><span class="zoom">10%</span><svg class="ic" width="14" height="10" viewBox="-7 -5 14 10"><use href="#i-chev"/></svg></div>
    </section>
    <section class="bgsec">
      <div class="row h"><span>ページ</span><svg class="ic" width="28" height="28" viewBox="-14 -14 28 28"><rect x="-12" y="-12.5" width="10" height="25" rx="5"/><circle cx="-7" cy="7.5" r="1" fill="#fff"/><path d="M-2-4 3-10.500Q6-13.500 9.500-10.500 12-8 10-4.500L-2 11.500M4.500 3H9Q12.500 3 12.500 8 12.500 12.500 9 12.500H-7"/></svg></div>
      <div class="row color"><div class="field"><i class="sw"></i><span class="hex">1E1E1E</span><i class="sep"></i><span class="pct">100</span><span class="sign">%</span></div>
        <svg class="ic" width="30" height="26" viewBox="-15 -13 30 26"><path d="M-13 0Q-9-9 0-9T13 0Q9 9 0 9T-13 0Z"/><circle r="3.5"/></svg></div>
    </section>
    <section class="row sub"><span>バリアブル</span><svg class="ic" width="28" height="26" viewBox="-14 -13 28 26"><path d="M-7-12V-1M-7 7V12M7-12V-7M7 1V12"/><circle cx="-7" cy="3" r="4.2"/><circle cx="7" cy="-3" r="4.2"/></svg></section>
    <section class="row sub"><span>スタイル</span><svg class="ic" width="28" height="26" viewBox="-14 -13 28 26"><use href="#i-plus"/></svg></section>
    <section class="row sub"><span>エクスポート</span><svg class="ic" width="28" height="26" viewBox="-14 -13 28 26"><use href="#i-plus"/></svg></section>
    <div class="help">?</div>
  </aside>
</main>
</body>
</html>
```
FILE: styles.css
```css
* { box-sizing: border-box; }
html, body { margin: 0; height: 1800px; overflow: hidden; }
body { display: flex; flex-direction: column; width: 2880px; background: #1e1e1e; color: #fff; font-family: Inter, "Noto Sans CJK JP", sans-serif; font-size: 22px; letter-spacing: .1px; }
svg { display: block; flex: none; }
.defs { position: absolute; }
i, em { font-style: normal; }
p, ul, figure { margin: 0; padding: 0; }

/* Browser chrome */
.browser { flex: none; height: 176px; background: #3c3c3c; border-bottom: 2px solid #4a4a4a; color: #e3e3e3; }
.tabstrip { display: flex; height: 102px; margin-bottom: -20px; padding: 14px 12px 20px 26px; background: linear-gradient(#1f2120 82px, #3c3c3c 82px); }
.lights { display: flex; gap: 16px; padding-top: 15px; }
.lights i { width: 24px; height: 24px; border-radius: 50%; }
.lights .red { background: #ed6a5e; }
.lights .off { background: #3f4040; }
.lights .green { background: #61c554; }
.tab { position: relative; display: flex; align-items: center; width: 464px; height: 68px; margin-left: 26px; padding: 0 24px 11px 22px; background: #3c3c3c; border-radius: 20px 20px 0 0; font-size: 24px; letter-spacing: 0; }
.tab::before, .tab::after { content: ""; position: absolute; bottom: 0; width: 20px; height: 20px; }
.tab::before { left: -20px; background: radial-gradient(circle at 0 0, transparent 19.5px, #3c3c3c 20px); }
.tab::after { right: -20px; background: radial-gradient(circle at 100% 0, transparent 19.5px, #3c3c3c 20px); }
.tab span { flex: 1; margin-left: 22px; white-space: nowrap; }
.tab .x, .newtab, .tabmenu svg { fill: none; stroke: #e3e3e3; stroke-width: 2.8; }
.newtab { margin: 15px 0 0 29px; }
.tabmenu { display: flex; align-items: center; justify-content: center; width: 56px; height: 56px; margin-left: auto; border-radius: 18px; background: #3c3c3c; }
.tabmenu svg { stroke-width: 3.4; }
.toolbar { position: relative; display: flex; align-items: center; height: 92px; padding: 0 32px 0 31px; background: #3c3c3c; border-radius: 18px 18px 0 0; }
.nav { margin-right: 46px; fill: none; stroke: #c7c7c7; stroke-width: 3; }
.nav.muted { stroke: #757575; }
.nav:nth-child(3) { margin-right: 39px; }
.omnibox { display: flex; align-items: center; flex: none; width: 2112px; height: 68px; padding: 0 32px 0 10px; border-radius: 34px; background: #282828; }
.site { display: flex; align-items: center; justify-content: center; width: 48px; height: 48px; border-radius: 50%; background: #3c3c3c; }
.site svg { fill: none; stroke: #e3e3e3; stroke-width: 3; }
.url { flex: 1; margin-left: 16px; font-size: 28px; letter-spacing: 0; color: #c7c7c7; white-space: nowrap; }
.url b { font-weight: 400; color: #e8e8e8; }
.star { fill: none; stroke: #c7c7c7; stroke-width: 3; }
.ext { display: flex; align-items: center; flex: 1; padding-left: 35px; }
.ext > svg:nth-child(2) { margin-left: 39px; }
.ext > svg:nth-child(3) { margin-left: 39px; }
.bar { width: 4px; height: 40px; margin: 0 33px; border-radius: 2px; background: #5d5d5d; }
.ext .bar + svg + .bar { margin-right: 32px; }
.ext svg + .bar { margin-left: 34px; }
.me { display: flex; align-items: center; justify-content: center; flex: none; width: 40px; height: 40px; border-radius: 50%; background: #3b8577; color: #fff; font-size: 22px; }
.me.big { width: 48px; height: 48px; font-size: 26px; }
.dots { display: flex; flex-direction: column; gap: 5px; margin-left: 49px; }
.dots i { width: 6px; height: 7px; border-radius: 50%; background: #c7c7c7; }

main { display: flex; flex: 1; min-height: 0; }
.ic { fill: none; stroke: #fff; stroke-width: 2; stroke-linecap: round; stroke-linejoin: round; }
.row { display: flex; align-items: center; }

/* Left panel */
.left { width: 482px; flex: none; background: #2c2c2c; border-right: 2px solid #444; overflow: hidden; }
.left section { border-bottom: 2px solid #444; }
.file { height: 194px; padding: 31px 31px 0 34px; }
.top { justify-content: space-between; height: 34px; padding-left: 2px; }
.title { height: 32px; margin-top: 30px; font-size: 26px; font-weight: 600; letter-spacing: -.1px; }
.title svg { margin-left: 30px; }
.team { height: 32px; margin-top: 9px; color: #b3b3b3; letter-spacing: 0; }
.team em { display: flex; align-items: center; justify-content: center; width: 60px; height: 32px; margin-left: 17px; padding-bottom: 2px; border-radius: 10px; background: #394360; color: #80caff; }
.left .tabs { height: 82px; padding: 0 21px 0 16px; }
.pill { display: flex; align-items: center; justify-content: center; width: 119px; height: 48px; padding-bottom: 3px; border-radius: 10px; background: #383838; font-weight: 700; letter-spacing: -.6px; }
.other { margin-left: 25px; padding-bottom: 3px; color: #b3b3b3; letter-spacing: -.2px; }
.search { margin: 0 22px 0 auto; }
.pages { height: 368px; padding: 0 16px; }
.head { justify-content: space-between; height: 80px; padding: 0 11px 0 16px; margin-bottom: 8px; font-weight: 700; }
.head span, .layers-head span, .h span, .sub span { padding-bottom: 3px; }
.page { justify-content: space-between; height: 48px; margin-bottom: 16px; padding: 0 10px 0 16px; border-radius: 10px; letter-spacing: .1px; }
.page.on { background: #383838; font-weight: 500; }
.code { stroke: #79d297; }
.quota { height: 128px; border-radius: 10px; background: #383838; overflow: hidden; }
.meter { height: 8px; background: #444; }
.meter i { display: block; width: 296px; height: 8px; border-radius: 0 4px 4px 0; background: #3b8ee6; }
.quota p { padding: 23px 0 0 32px; line-height: 32px; color: #e8e8e8; letter-spacing: -.15px; }
.quota span { letter-spacing: .15px; }
.quota a { color: #7cb9f2; }
.left section.layers-head { justify-content: space-between; height: 80px; padding: 0 27px 0 32px; font-weight: 700; }
.layers { list-style: none; }
.layers li { display: flex; align-items: center; height: 64px; padding: 0 27px 0 35px; white-space: nowrap; }
.layers span { flex: none; margin-left: 19px; letter-spacing: .15px; }
.layers .f { font-weight: 600; }
.layers .hid span { color: #757575; }
.eye { margin-left: auto; }
.comp { color: #c8a5f5; }
.comp svg { stroke: #7d6699; }

/* Canvas */
.canvas { position: relative; flex: 1; overflow: hidden; background: #1e1e1e; }
.stage { position: absolute; left: -482px; top: -176px; width: 2880px; height: 1800px; }
figure { position: absolute; display: flex; flex-direction: column; justify-content: flex-end; }
figcaption { display: flex; align-items: center; gap: 8px; height: 24px; margin-bottom: 8px; color: #808080; white-space: nowrap; letter-spacing: .04px; }
figcaption svg { fill: none; stroke: #808080; stroke-width: 2; }
.ab { background: #fff; }
.r1 { top: 227px; } .r2 { top: 514px; } .r3 { top: 801px; } .r4 { top: 1143px; } .r5 { top: 1734px; height: 72px; }
.c0 { left: 577px; } .c1 { left: 915px; } .c1h { left: 913px; } .c2 { left: 1247px; } .c2b { left: 1250px; } .c2c { left: 1253px; } .c3 { left: 1580px; } .c3h { left: 1586px; } .c4 { left: 1913px; } .c4h { left: 1923px; } .c5 { left: 2257px; }
.note { position: absolute; left: 786px; top: 1526px; font-size: 3.5px; line-height: 4px; color: #000; }
.vscroll, .hscroll { position: absolute; border: 2px solid rgba(120, 120, 120, .8); border-radius: 6px; background: rgba(0, 0, 0, .32); }
.vscroll { left: 2380px; top: 342px; width: 12px; height: 624px; }
.hscroll { left: 911px; top: 1782px; width: 308px; height: 12px; }

/* Wireframe drawings */
.ab text, .defs text { fill: #222; dominant-baseline: central; text-rendering: geometricPrecision; letter-spacing: 0; }
.t30 { font-size: 2.9px; } .t32 { font-size: 3.2px; } .t34 { font-size: 3.4px; } .t36 { font-size: 3.7px; } .t38 { font-size: 4px; } .t40 { font-size: 4.2px; }
.t42 { font-size: 4.6px; } .t46 { font-size: 4.9px; } .t48 { font-size: 5px; } .t50 { font-size: 5.2px; } .t60 { font-size: 6.8px; }
.m { font-weight: 500; } .b { font-weight: 700; } .u { text-decoration: underline; }
.ab .inv, .defs .inv { fill: #eee; }
.ab .red, .defs .red { fill: #e05050; }
.ab .dim, .defs .dim { fill: #777; }
.faint { fill: none; stroke: #ebebeb; stroke-width: .8; }
.chip rect { fill: #fff; stroke: #c4c4c4; stroke-width: .5; }
.fld rect { fill: #fff; stroke: #8a8a8a; stroke-width: .7; }
.bx { fill: #fff; stroke: #9a9a9a; stroke-width: .7; }
.tag { fill: #f3f3f3; stroke: #888; stroke-width: .7; }
.ln { fill: none; stroke: #333; stroke-width: .7; }
.lng { fill: none; stroke: #8a8a8a; stroke-width: .7; }
.ln2 { fill: none; stroke: #222; stroke-width: .9; }
.pink { stroke: #e83fa5; } .blue { stroke: #2f80ed; }
.plan { fill: none; stroke: #888; stroke-width: .6; }
.pop { fill: #fff; filter: drop-shadow(0 1px 1px rgba(0, 0, 0, .4)); }
.price rect { fill: #fff; filter: drop-shadow(0 .5px .6px rgba(0, 0, 0, .5)); }
.defs .mapt text { font-size: 4px; fill: #8a8a8a; }
.defs .mapt .city { font-size: 6.8px; fill: #666; }
.defs .mapt .vi { fill: #a79bd8; } .defs .mapt .gr { fill: #85ad6a; }

/* Floating toolbar */
.tools { position: absolute; left: 976px; top: 1680px; display: flex; align-items: center; width: 929px; height: 96px; border: 1px solid #444; border-radius: 26px; background: #2c2c2c; box-shadow: 0 4px 16px rgba(0, 0, 0, .5); }
.set { display: flex; align-items: center; width: 713px; height: 100%; padding-left: 14px; border-right: 2px solid #444; }
.move { display: flex; align-items: center; justify-content: center; width: 64px; height: 64px; margin-right: 11px; border-radius: 10px; background: #3b8ee6; }
.tool { margin: 0 25px 0 39px; }
.pen { margin: 0 24px 0 38px; }
.tool + .gap { margin-left: 19px; }
.modes { display: flex; align-items: center; width: 183px; height: 64px; margin-left: 15px; padding-left: 17px; border-radius: 10px; background: #444; }
.modes b { display: flex; align-items: center; justify-content: center; width: 56px; height: 56px; margin: 0 17px; border-radius: 8px; background: #2c2c2c; box-shadow: 0 0 2px #1a1a1a; }
.g { stroke: #c4c4c4; }
.bl { stroke: #7cc4f8; }

/* Right panel */
.right { position: relative; width: 482px; flex: none; background: #2c2c2c; border-left: 2px solid #444; }
.right section { border-bottom: 2px solid #444; }
.share { height: 162px; padding: 16px 16px 0; }
.share .row:first-child { height: 64px; padding-left: 8px; }
.c1g { margin-left: 9px; } .play { margin-left: 191px; } .c2g { margin: 0 17px 0 27px; }
button { flex: none; width: 92px; height: 64px; padding: 0 0 2px; border: 0; border-radius: 10px; background: #3b8ee6; color: #fff; font: inherit; }
.tabs2 { height: 48px; margin-top: 16px; }
.tabs2 .other { letter-spacing: .1px; }
.tabs2 .zoom { margin-left: auto; margin-right: 30px; font-size: 23px; letter-spacing: 0; }
.tabs2 svg { margin-right: 13px; }
.bgsec { height: 170px; padding: 0 26px 0 32px; }
.h { justify-content: space-between; height: 80px; font-weight: 700; }
.color { justify-content: space-between; height: 48px; margin-top: 8px; margin-right: -1px; }
.field { display: flex; align-items: center; width: 368px; height: 48px; padding-left: 10px; border-radius: 10px; background: #383838; }
.sw { width: 28px; height: 28px; border: 2px solid #333; border-radius: 5px; background: #1e1e1e; }
.hex { width: 205px; margin-left: 13px; }
.sep { width: 2px; height: 46px; background: #2c2c2c; }
.pct { margin-left: 17px; letter-spacing: .4px; }
.sign { margin-left: 22px; color: #b3b3b3; font-size: 20px; }
.sub { justify-content: space-between; height: 82px; padding: 0 26px 0 32px; color: #d0d0d0; font-weight: 500; }
.sub .ic { stroke: #c4c4c4; }
.help { position: absolute; right: 48px; bottom: 48px; display: flex; align-items: center; justify-content: center; width: 64px; height: 64px; border-radius: 50%; background: #1e1e1e; font-size: 31px; }
```
